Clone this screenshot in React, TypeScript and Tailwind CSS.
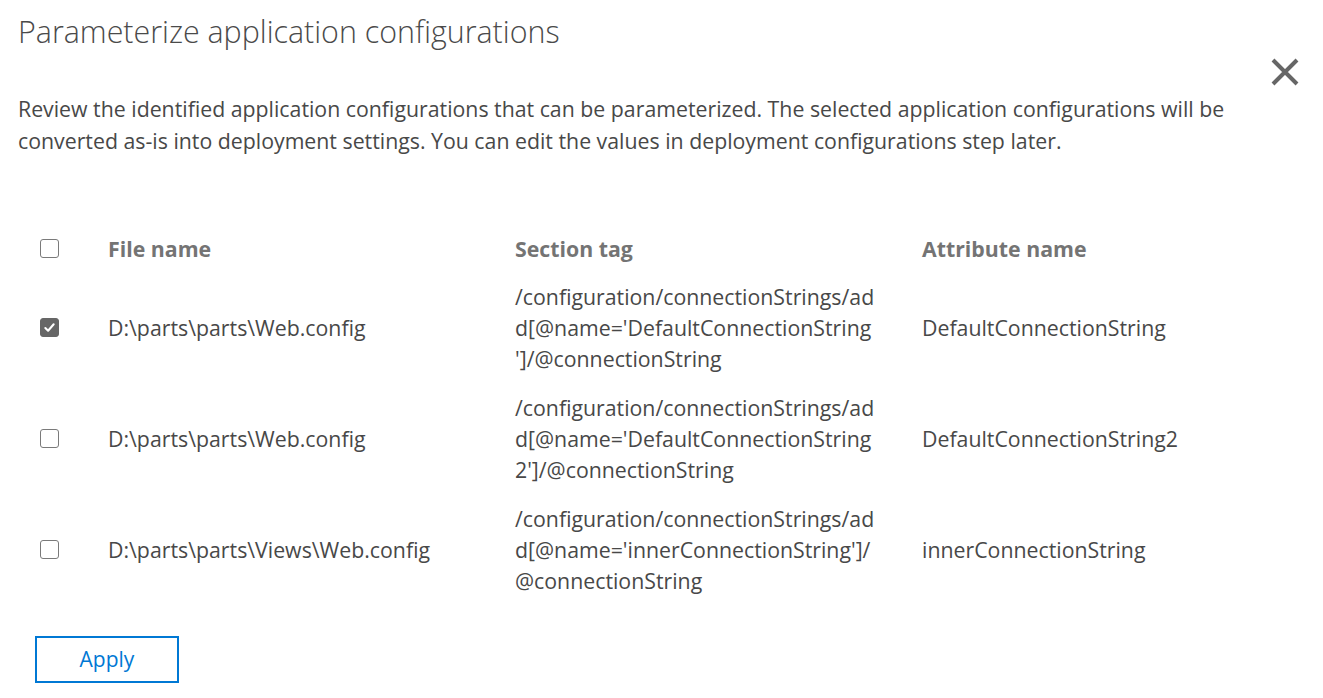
import React, { useState } from 'react';

type Fila = {
  archivo: string;
  seccion: string[];
  atributo: string;
  marcada: boolean;
};

const filasIniciales: Fila[] = [
  {
    archivo: 'D:\\parts\\parts\\Web.config',
    seccion: [
      '/configuration/connectionStrings/ad',
      "d[@name='DefaultConnectionString",
      "']/@connectionString",
    ],
    atributo: 'DefaultConnectionString',
    marcada: true,
  },
  {
    archivo: 'D:\\parts\\parts\\Web.config',
    seccion: [
      '/configuration/connectionStrings/ad',
      "d[@name='DefaultConnectionString",
      "2']/@connectionString",
    ],
    atributo: 'DefaultConnectionString2',
    marcada: false,
  },
  {
    archivo: 'D:\\parts\\parts\\Views\\Web.config',
    seccion: [
      '/configuration/connectionStrings/ad',
      "d[@name='innerConnectionString']/",
      '@connectionString',
    ],
    atributo: 'innerConnectionString',
    marcada: false,
  },
];

const Casilla: React.FC<{ marcada: boolean; onClick: () => void }> = ({ marcada, onClick }) => (
  <button
    type="button"
    onClick={onClick}
    className={
      marcada
        ? 'w-[19px] h-[19px] rounded-[3px] bg-[#666666] border border-[#666666] flex items-center justify-center'
        : 'w-[19px] h-[19px] rounded-[3px] bg-white border border-[#7a7a7a] flex items-center justify-center'
    }
  >
    {marcada && (
      <svg width="13" height="13" viewBox="0 0 14 14" fill="none">
        <path d="M2.5 7.5 L5.5 10.5 L11.5 3.5" stroke="white" strokeWidth="2.2" strokeLinecap="round" strokeLinejoin="round" />
      </svg>
    )}
  </button>
);

const App: React.FC = () => {
  const [filas, setFilas] = useState(filasIniciales);
  const todas = filas.every((f) => f.marcada);

  const alternar = (i: number) => {
    setFilas(filas.map((f, j) => (j === i ? { ...f, marcada: !f.marcada } : f)));
  };

  return (
    <div className="w-[1323px] h-[698px] bg-white px-[18px] pt-[12px] text-[#484848] font-['Open_Sans',sans-serif] overflow-hidden">
      <div className="flex justify-between">
        <h1 className="text-[30.4px] leading-[40px] font-light text-[#4a4a4a] whitespace-nowrap">
          Parameterize application configurations
        </h1>
        <button type="button" className="mt-[45px] mr-[5px] text-[#666666]">
          <svg width="30" height="30" viewBox="0 0 30 30">
            <path d="M3 3 L27 27 M27 3 L3 27" stroke="currentColor" strokeWidth="4" />
          </svg>
        </button>
      </div>

      <p className="mt-[6px] text-[21.3px] leading-[32px] whitespace-nowrap">
        Review the identified application configurations that can be parameterized. The selected application configurations will be
        <br />
        converted as-is into deployment settings. You can edit the values in deployment configurations step later.
      </p>

      <div className="mt-[67px] grid grid-cols-[90px_407px_407px_1fr] text-[21.3px] leading-[31px] whitespace-nowrap">
        <div className="h-[48px] flex items-center pl-[22px]">
          <Casilla
            marcada={todas}
            onClick={() => setFilas(filas.map((f) => ({ ...f, marcada: !todas })))}
          />
        </div>
        <div className="h-[48px] flex items-center font-bold text-[#747474]">File name</div>
        <div className="h-[48px] flex items-center font-bold text-[#747474]">Section tag</div>
        <div className="h-[48px] flex items-center font-bold text-[#747474]">Attribute name</div>

        {filas.map((f, i) => (
          <React.Fragment key={i}>
            <div className="h-[111px] flex items-center pl-[22px]">
              <Casilla marcada={f.marcada} onClick={() => alternar(i)} />
            </div>
            <div className="h-[111px] flex items-center">{f.archivo}</div>
            <div className="h-[111px] flex flex-col justify-center">
              {f.seccion.map((l, k) => (
                <span key={k}>{l}</span>
              ))}
            </div>
            <div className="h-[111px] flex items-center">{f.atributo}</div>
          </React.Fragment>
        ))}
      </div>

      <button
        type="button"
        className="mt-[31px] ml-[17px] w-[144px] h-[47px] border-2 border-[#0078d4] text-[#0078d4] text-[21px]"
      >
        Apply
      </button>
    </div>
  );
};

export default App;
